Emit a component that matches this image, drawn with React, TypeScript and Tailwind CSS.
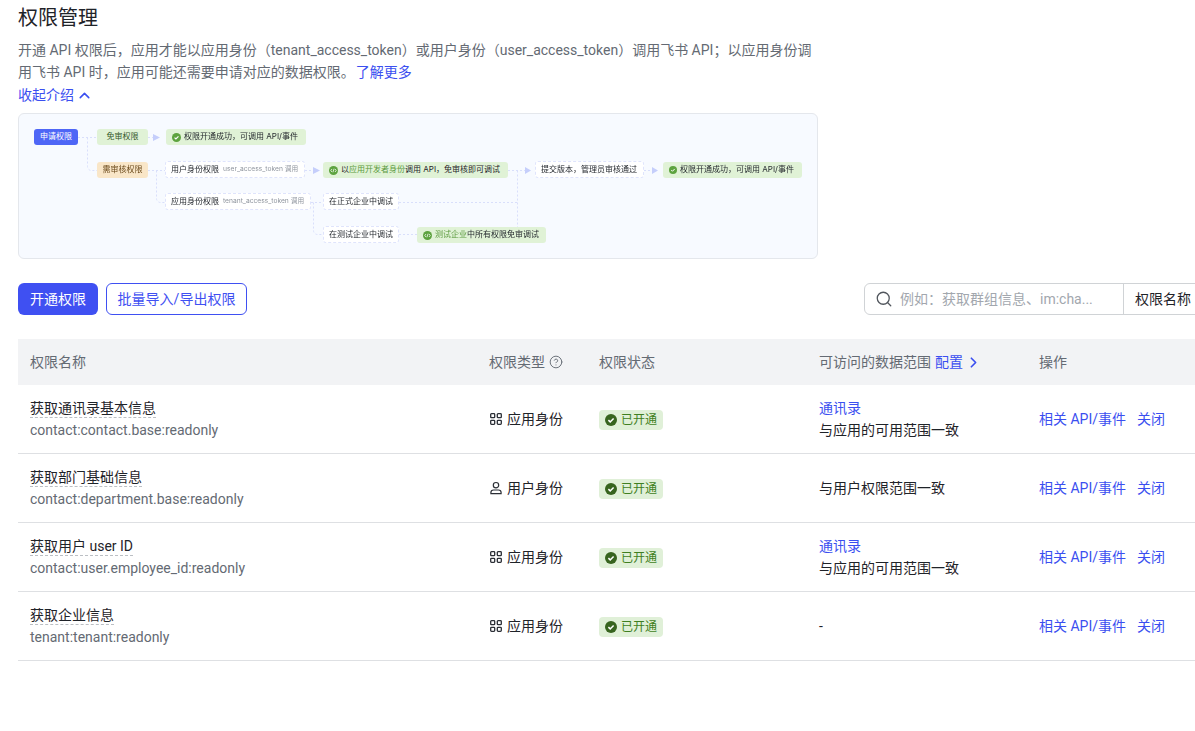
import { ChevronRight, ChevronUp, CircleHelp, Search } from 'lucide-react';

const font = { fontFamily: 'Roboto, "Noto Sans CJK SC", sans-serif' };
const diagramFont = { fontFamily: 'Inter, "Noto Sans CJK SC", sans-serif' };

const rows = [
  {
    name: '获取通讯录基本信息',
    scopeKey: 'contact:contact.base:readonly',
    type: 'app',
    link: '通讯录',
    range: '与应用的可用范围一致',
  },
  {
    name: '获取部门基础信息',
    scopeKey: 'contact:department.base:readonly',
    type: 'user',
    range: '与用户权限范围一致',
  },
  {
    name: '获取用户 user ID',
    scopeKey: 'contact:user.employee_id:readonly',
    type: 'app',
    link: '通讯录',
    range: '与应用的可用范围一致',
  },
  {
    name: '获取企业信息',
    scopeKey: 'tenant:tenant:readonly',
    type: 'app',
    range: '-',
  },
];

const gridCols = 'grid grid-cols-[459px_110px_220px_220px_1fr]';

function AppIcon() {
  return (
    <svg width="14" height="14" viewBox="0 0 14 14" fill="none" stroke="#2b2f36" strokeWidth="1.3">
      <rect x="1.7" y="1.7" width="4" height="4" rx="0.8" />
      <rect x="8.3" y="1.7" width="4" height="4" rx="0.8" />
      <rect x="1.7" y="8.3" width="4" height="4" rx="0.8" />
      <rect x="8.3" y="8.3" width="4" height="4" rx="0.8" />
    </svg>
  );
}

function UserIcon() {
  return (
    <svg width="14" height="14" viewBox="0 0 14 14" fill="none" stroke="#2b2f36" strokeWidth="1.2">
      <circle cx="7" cy="4.2" r="2.7" />
      <path d="M1.9 12.6v-1c0-1.5 1.2-2.6 2.6-2.6h5c1.4 0 2.6 1.1 2.6 2.6v1z" />
    </svg>
  );
}

function CheckDot({ size, fill }: { size: number; fill: string }) {
  return (
    <svg width={size} height={size} viewBox="0 0 12 12" className="flex-none">
      <circle cx="6" cy="6" r="6" fill={fill} />
      <path d="M3.4 6.1l1.8 1.8 3.4-3.5" fill="none" stroke="#fff" strokeWidth="1.5" />
    </svg>
  );
}

function CodeDot() {
  return (
    <svg width="9" height="9" viewBox="0 0 12 12" className="flex-none">
      <circle cx="6" cy="6" r="6" fill="#5da33f" />
      <path d="M4 4L2.4 6 4 8M8 4l1.6 2L8 8M6.8 3.6L5.2 8.4" fill="none" stroke="#fff" strokeWidth="1" />
    </svg>
  );
}

function Diagram() {
  const white =
    'absolute flex items-center h-[17px] bg-white border border-dashed border-[#dfe4fc] rounded-[3px] text-[8px] text-[#1f2329] whitespace-nowrap';
  const green =
    'absolute flex items-center h-[16px] bg-[#e0f2d6] rounded-[3px] text-[8px] text-[#1f2329] whitespace-nowrap';

  return (
    <div style={diagramFont} className="mt-[6px] w-[800px] h-[146px] bg-[#f7faff] border border-[#e4e7ec] rounded-md">
      <div className="relative w-[798px] h-[144px] blur-[0.3px]">
        <svg className="absolute inset-0" width="798" height="144" fill="none">
          <g stroke="#d9dffb" strokeWidth="1" strokeDasharray="2 2">
            <path d="M59 23.5h19M68.5 23.5v29a4 4 0 0 0 4 4H78" />
            <path d="M129 56.5h17M137.5 56.5v28a4 4 0 0 0 4 4H146" />
            <path d="M292 88.5h12M294.5 88.5v28a4 4 0 0 0 4 4H304" />
            <path d="M380 120.5h18M380 88.5h119M489 56.5h17M498.5 56.5v57" />
            <path d="M129 23.5h5M286 56.5h8M625 56.5h8" />
          </g>
          <g fill="#c5cefb">
            <path d="M134 20l7 3.5-7 3.5z" />
            <path d="M294 53l7 3.5-7 3.5z" />
            <path d="M506 53l6 3.5-6 3.5z" />
            <path d="M633 53l6 3.5-6 3.5z" />
          </g>
        </svg>

        <div className="absolute left-[15px] top-[15px] w-[44px] h-[16px] flex items-center justify-center bg-[#4e66f6] rounded-[3px] text-[8px] text-white">
          申请权限
        </div>
        <div className="absolute left-[78px] top-[15px] w-[51px] h-[16px] flex items-center justify-center bg-[#e0f2d6] rounded-[3px] text-[8px] text-[#35592a]">
          免审权限
        </div>
        <div className={`${green} left-[147px] top-[15px] w-[140px] pl-[6px] gap-[3px]`}>
          <CheckDot size={9} fill="#5da33f" />
          权限开通成功，可调用 API/事件
        </div>
        <div className="absolute left-[78px] top-[48px] w-[51px] h-[16px] flex items-center justify-center bg-[#f9e6c8] rounded-[3px] text-[8px] text-[#6b4a1c]">
          需审核权限
        </div>
        <div className={`${white} left-[146px] top-[47px] w-[140px] pl-[5px]`}>
          用户身份权限
          <span className="ml-[4px] text-[6.7px] text-[#8f959e]">user_access_token 调用</span>
        </div>
        <div className={`${white} left-[146px] top-[79px] w-[146px] pl-[5px]`}>
          应用身份权限
          <span className="ml-[4px] text-[6.7px] text-[#8f959e]">tenant_access_token 调用</span>
        </div>
        <div className={`${green} left-[304px] top-[48px] w-[185px] pl-[6px] gap-[3px]`}>
          <CodeDot />
          <span>
            以<span className="text-[#5b9a3e]">应用开发者身份</span>调用 API，免审核即可调试
          </span>
        </div>
        <div className={`${white} left-[516px] top-[47px] w-[109px] pl-[5px]`}>提交版本，管理员审核通过</div>
        <div className={`${green} left-[644px] top-[48px] w-[139px] pl-[6px] gap-[3px]`}>
          <CheckDot size={8} fill="#5da33f" />
          权限开通成功，可调用 API/事件
        </div>
        <div className={`${white} left-[304px] top-[79px] w-[76px] pl-[5px]`}>在正式企业中调试</div>
        <div className={`${white} left-[304px] top-[112px] w-[76px] pl-[5px]`}>在测试企业中调试</div>
        <div className={`${green} left-[398px] top-[113px] w-[129px] pl-[6px] gap-[3px]`}>
          <CodeDot />
          <span>
            <span className="text-[#5b9a3e]">测试企业</span>中所有权限免审调试
          </span>
        </div>
      </div>
    </div>
  );
}

export default function App() {
  return (
    <div style={font} className="h-screen w-full overflow-hidden bg-white pl-[18px] pt-[4px] text-sm text-[#1f2329]">
      <h1 className="text-xl leading-[28px] font-normal">权限管理</h1>
      <p className="mt-[7px] w-[800px] leading-[22px] text-[#646a73]">
        开通 API 权限后，应用才能以应用身份（tenant_access_token）或用户身份（user_access_token）调用飞书 API；以应用身份调用飞书 API 时，应用可能还需要申请对应的数据权限。
        <a className="ml-px text-[#3b4ff0]">了解更多</a>
      </p>
      <div className="mt-px flex items-center gap-[2px] leading-[23px] text-[#3b4ff0]">
        收起介绍
        <ChevronUp className="h-[17px] w-[17px]" strokeWidth={2.2} />
      </div>

      <Diagram />

      <div className="mt-[24px] flex items-center">
        <button className="h-8 w-20 rounded-md bg-[#3f50f2] text-white">开通权限</button>
        <button className="ml-2 h-8 w-[141px] rounded-md border border-[#3f50f2] bg-white text-[#3f50f2]">
          批量导入/导出权限
        </button>
        <div className="ml-auto mr-[-14px] flex h-8 w-[345px] flex-none items-stretch rounded-md border border-[#d0d3d6]">
          <div className="flex w-[258px] items-center pl-[10px]">
            <Search className="h-[18px] w-[18px] flex-none text-[#51565d]" strokeWidth={1.7} />
            <span className="ml-[7px] text-[#a2a7ae]">例如：获取群组信息、im:cha...</span>
          </div>
          <div className="flex flex-1 items-center border-l border-[#d0d3d6] pl-[11px] text-[#1f2329]">权限名称</div>
        </div>
      </div>

      <div className="mt-[24px]">
        <div className={`${gridCols} h-[46px] items-center bg-[#f2f3f5] text-[#646a73]`}>
          <div className="pl-3">权限名称</div>
          <div className="flex items-center gap-[4px] pl-3">
            权限类型
            <CircleHelp className="h-[14px] w-[14px]" strokeWidth={1.6} />
          </div>
          <div className="pl-3">权限状态</div>
          <div className="flex items-center pl-3">
            可访问的数据范围
            <a className="ml-1 text-[#3b4ff0]">配置</a>
            <ChevronRight className="ml-[2px] h-[17px] w-[17px] text-[#3b4ff0]" strokeWidth={2.4} />
          </div>
          <div className="pl-3">操作</div>
        </div>

        {rows.map((row) => (
          <div key={row.scopeKey} className={`${gridCols} h-[69px] items-center border-b border-[#dee0e3]`}>
            <div className="pl-3 leading-[22px]">
              <div>
                <span className="inline-block h-[19px] border-b border-dashed border-[#bbbfc4] leading-[19px]">
                  {row.name}
                </span>
              </div>
              <div className="text-[#646a73]">{row.scopeKey}</div>
            </div>
            <div className="flex items-center gap-[4px] pl-3">
              {row.type === 'app' ? <AppIcon /> : <UserIcon />}
              {row.type === 'app' ? '应用身份' : '用户身份'}
            </div>
            <div className="flex pl-3 pt-px">
              <span className="inline-flex h-5 items-center gap-[4px] rounded bg-[#e0f0d8] px-[6px] text-xs text-[#3f7f22]">
                <CheckDot size={12} fill="#37641f" />
                已开通
              </span>
            </div>
            <div className="pl-3 leading-[22px]">
              {row.link && <div className="text-[#3b4ff0]">{row.link}</div>}
              <div>{row.range}</div>
            </div>
            <div className="flex gap-[11px] whitespace-nowrap pl-3 text-[#3b4ff0]">
              <a>相关 API/事件</a>
              <a>关闭</a>
            </div>
          </div>
        ))}
      </div>
    </div>
  );
}
